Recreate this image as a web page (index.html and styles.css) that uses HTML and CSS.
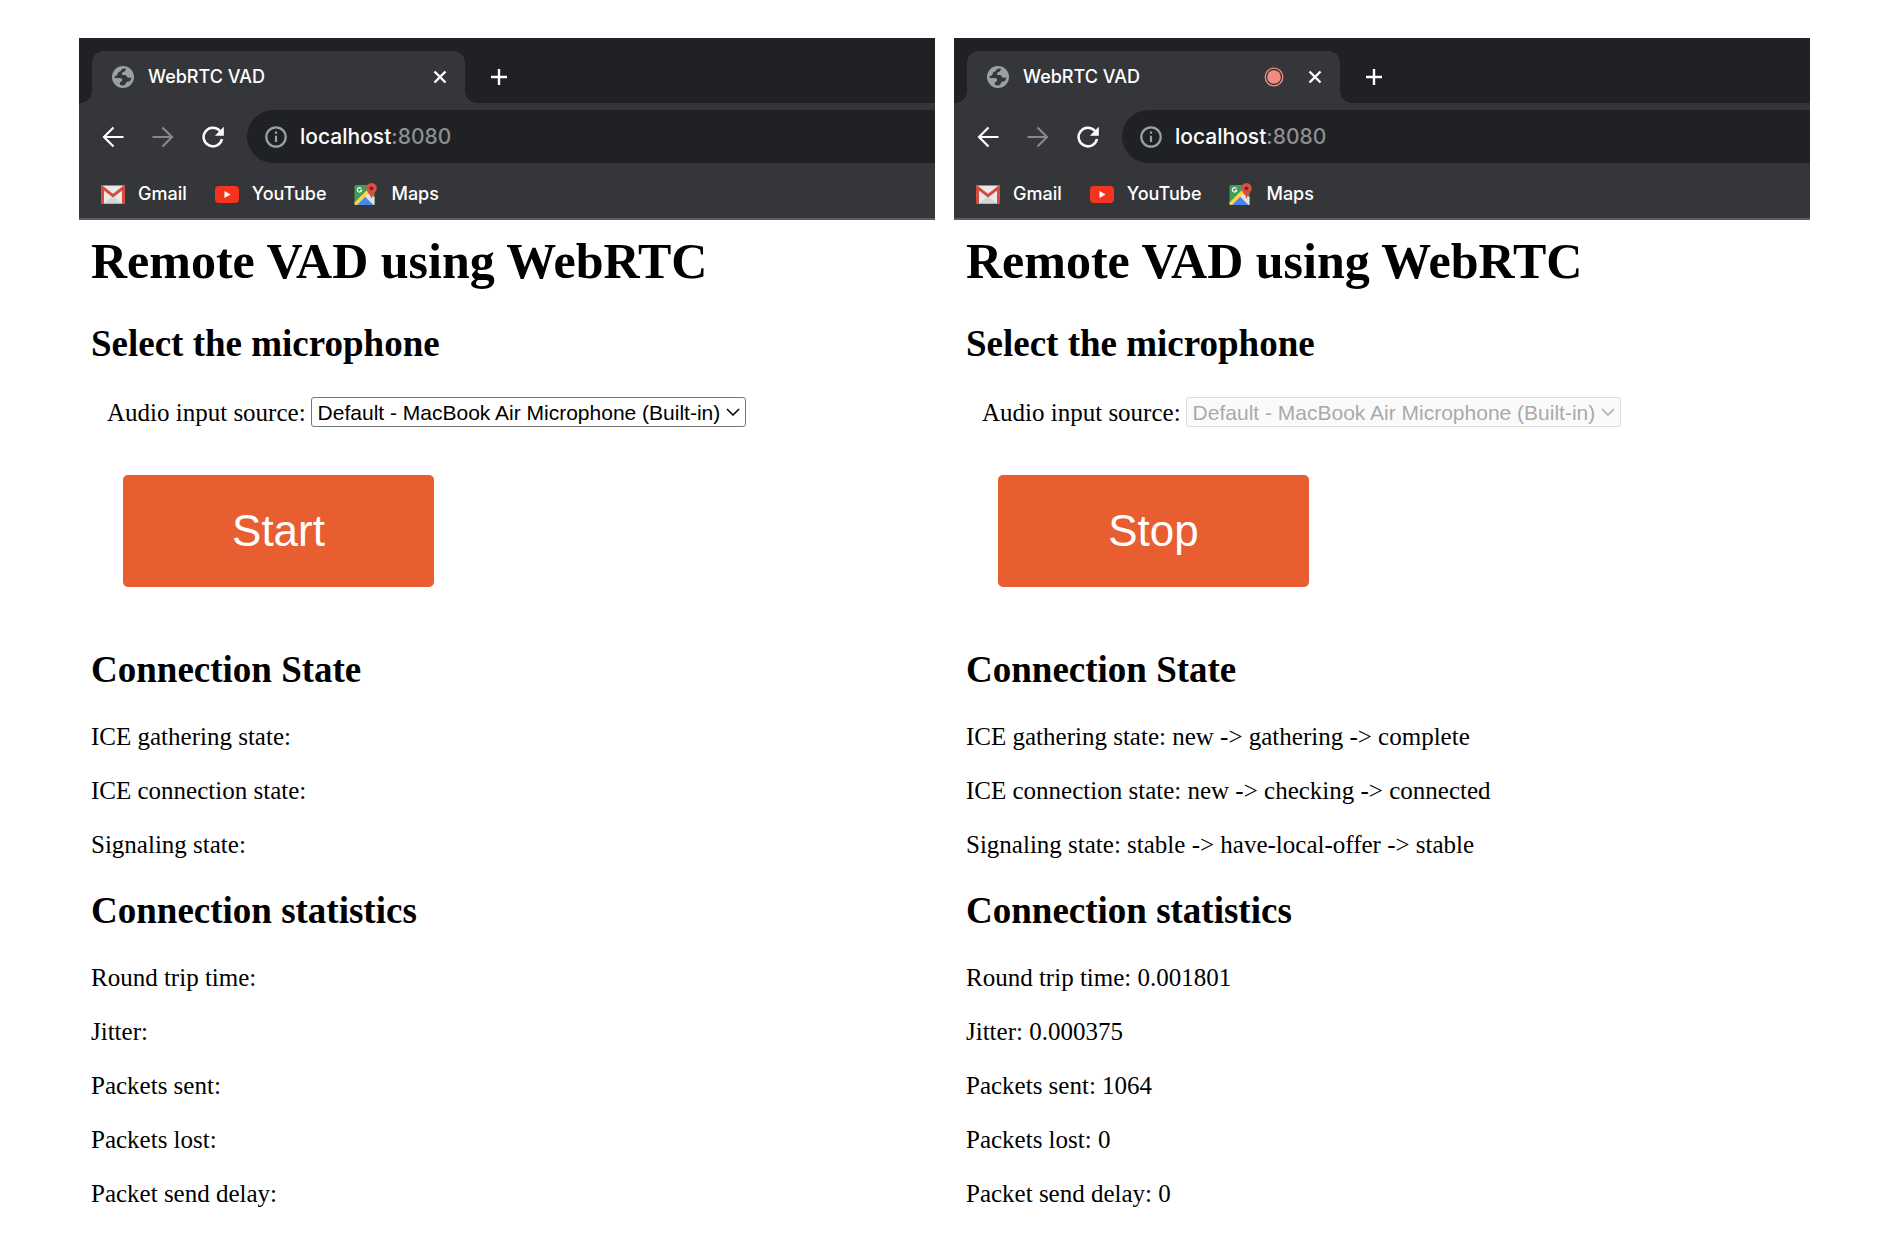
FILE: index.html
```html
<!DOCTYPE html>
<html lang="en">
<head>
<meta charset="utf-8">
<title>WebRTC VAD</title>
<link rel="stylesheet" href="styles.css">
</head>
<body>
<svg class="sprite" aria-hidden="true">
  <symbol id="globe" viewBox="0 0 22 22">
    <circle cx="11" cy="11" r="11" fill="#9aa0a6"/>
    <path d="M13.800 2.600C11.500 2.200 9.800 3 9.200 4.200 8.700 5.400 7.500 5.500 6.500 6.200 5.300 7.200 6 8.400 4.800 9.300 3.900 10 3 10 2.600 10.500V12h5.200c1.600 0 2.400.8 2.400 2 0 1.400-1.500 1.600-2.200 2.600-.5.800-.2 1.700.3 2.500 2 .8 3.700.5 4.700-.3.900-.8.600-2 1.600-2.700 1.100-.7 2.800-.3 3.700-1.600.7-1 1-2.100 1.100-3.300-1.300.8-2.600.9-3.700.2-1.300-.8-1.200-2.200-2.700-2.400-1.100-.1-2 .5-2.800-.3-.9-1 .1-2.200 1.300-2.600 1.500-.5 2.500-1.700 2.300-3.500z" fill="#35363a"/>
  </symbol>
  <symbol id="close" viewBox="0 0 14 14"><path d="M1.500 1.500l11 11M12.500 1.500l-11 11" stroke="#fff" stroke-width="2.400"/></symbol>
  <symbol id="plus" viewBox="0 0 16 16"><path d="M8 0v16M0 8h16" stroke="#fff" stroke-width="2.400"/></symbol>
  <symbol id="record" viewBox="0 0 20 20"><circle cx="10" cy="10" r="8.800" fill="none" stroke="#f28b82" stroke-width="1.300"/><circle cx="10" cy="10" r="6.800" fill="#f28b82"/></symbol>
  <symbol id="back" viewBox="0 0 22 22"><path d="M21.500 11H2M11.500 1.500L2 11l9.500 9.500" fill="none" stroke="currentColor" stroke-width="2.200"/></symbol>
  <symbol id="forward" viewBox="0 0 22 22"><path d="M.5 11H20M10.500 1.500L20 11l-9.500 9.500" fill="none" stroke="currentColor" stroke-width="2.200"/></symbol>
  <symbol id="reload" viewBox="0 0 22 22"><path d="M18 5A9.300 9.300 0 1 0 20 13" fill="none" stroke="#fff" stroke-width="2.500"/><path d="M21.800.8v9h-9z" fill="#fff"/></symbol>
  <symbol id="info" viewBox="0 0 22 22"><circle cx="11" cy="11" r="9.700" fill="none" stroke="#9aa0a6" stroke-width="2.200"/><path d="M11 9.700v6.300M11 5.500v2.300" stroke="#9aa0a6" stroke-width="2.200"/></symbol>
  <symbol id="gmail" viewBox="0 0 24 18">
    <rect width="24" height="18" rx="1.500" fill="#e9e9e9"/>
    <path d="M3 18l9-7.500 9 7.500z" fill="#d6d6d6"/>
    <path d="M1.500 18V2L12 10.200 22.500 2v16" fill="none" stroke="#d54b3d" stroke-width="3"/>
  </symbol>
  <symbol id="youtube" viewBox="0 0 24 17"><rect width="24" height="17" rx="4" fill="#f5341f"/><path d="M9.500 5v7l6-3.500z" fill="#fff"/></symbol>
  <symbol id="maps" viewBox="0 0 23 23">
    <rect y="2" width="20" height="20" rx="1.500" fill="#3f9d58"/>
    <path d="M1 21.500L12.500 10l7.500 4v8H1z" fill="#e4e4e4"/>
    <path d="M2 22l8.500-8.500 8.500 8.500z" fill="#4a86ee"/>
    <path d="M0 19.500L13 6.500l2 3L2.500 22H1.500A1.500 1.500 0 0 1 0 20.500z" fill="#fbd44b"/>
    <path d="M6.900 5.700A2.200 2.200 0 1 0 7.200 7.300H5.200" fill="none" stroke="#fff" stroke-width="1.100"/>
    <path d="M17 0a5.300 5.300 0 0 1 5.300 5.300c0 4-4 4.700-5.300 11-1.300-6.300-5.300-7-5.300-11A5.300 5.300 0 0 1 17 0z" fill="#d95040"/>
    <circle cx="17" cy="5.300" r="1.900" fill="#7d231a"/>
  </symbol>
</svg>

<main class="screens">
  <section class="window">
    <header class="chrome">
      <div class="tabstrip">
        <div class="tab">
          <svg class="favicon"><use href="#globe"/></svg>
          <span class="tab-title">WebRTC VAD</span>
          <button class="icon-button" aria-label="Close tab"><svg class="icon-close"><use href="#close"/></svg></button>
        </div>
        <button class="icon-button new-tab" aria-label="New tab"><svg class="icon-plus"><use href="#plus"/></svg></button>
      </div>
      <div class="toolbar">
        <button class="icon-button nav" aria-label="Back"><svg class="icon"><use href="#back"/></svg></button>
        <button class="icon-button nav dim" aria-label="Forward"><svg class="icon"><use href="#forward"/></svg></button>
        <button class="icon-button nav" aria-label="Reload"><svg class="icon"><use href="#reload"/></svg></button>
        <div class="omnibox"><svg class="icon"><use href="#info"/></svg><span class="url">localhost<span class="port">:8080</span></span></div>
      </div>
      <nav class="bookmarks">
        <a class="bookmark" href="#"><svg class="icon-mark"><use href="#gmail"/></svg>Gmail</a>
        <a class="bookmark" href="#"><svg class="icon-mark"><use href="#youtube"/></svg>YouTube</a>
        <a class="bookmark" href="#"><svg class="icon-mark"><use href="#maps"/></svg>Maps</a>
      </nav>
    </header>
    <div class="page">
      <h1>Remote VAD using WebRTC</h1>
      <h2>Select the microphone</h2>
      <div class="source">
        <label for="source-idle">Audio input source:</label>
        <select class="picker" id="source-idle"><option>Default - MacBook Air Microphone (Built-in)</option></select>
      </div>
      <button class="action">Start</button>
      <h2>Connection State</h2>
      <p>ICE gathering state:</p>
      <p>ICE connection state:</p>
      <p>Signaling state:</p>
      <h2>Connection statistics</h2>
      <p>Round trip time:</p>
      <p>Jitter:</p>
      <p>Packets sent:</p>
      <p>Packets lost:</p>
      <p>Packet send delay:</p>
    </div>
  </section>

  <section class="window">
    <header class="chrome">
      <div class="tabstrip">
        <div class="tab">
          <svg class="favicon"><use href="#globe"/></svg>
          <span class="tab-title">WebRTC VAD</span>
          <svg class="icon-record"><use href="#record"/></svg>
          <button class="icon-button" aria-label="Close tab"><svg class="icon-close"><use href="#close"/></svg></button>
        </div>
        <button class="icon-button new-tab" aria-label="New tab"><svg class="icon-plus"><use href="#plus"/></svg></button>
      </div>
      <div class="toolbar">
        <button class="icon-button nav" aria-label="Back"><svg class="icon"><use href="#back"/></svg></button>
        <button class="icon-button nav dim" aria-label="Forward"><svg class="icon"><use href="#forward"/></svg></button>
        <button class="icon-button nav" aria-label="Reload"><svg class="icon"><use href="#reload"/></svg></button>
        <div class="omnibox"><svg class="icon"><use href="#info"/></svg><span class="url">localhost<span class="port">:8080</span></span></div>
      </div>
      <nav class="bookmarks">
        <a class="bookmark" href="#"><svg class="icon-mark"><use href="#gmail"/></svg>Gmail</a>
        <a class="bookmark" href="#"><svg class="icon-mark"><use href="#youtube"/></svg>YouTube</a>
        <a class="bookmark" href="#"><svg class="icon-mark"><use href="#maps"/></svg>Maps</a>
      </nav>
    </header>
    <div class="page">
      <h1>Remote VAD using WebRTC</h1>
      <h2>Select the microphone</h2>
      <div class="source">
        <label for="source-live">Audio input source:</label>
        <select class="picker" id="source-live" disabled><option>Default - MacBook Air Microphone (Built-in)</option></select>
      </div>
      <button class="action">Stop</button>
      <h2>Connection State</h2>
      <p>ICE gathering state: new -&gt; gathering -&gt; complete</p>
      <p>ICE connection state: new -&gt; checking -&gt; connected</p>
      <p>Signaling state: stable -&gt; have-local-offer -&gt; stable</p>
      <h2>Connection statistics</h2>
      <p>Round trip time: 0.001801</p>
      <p>Jitter: 0.000375</p>
      <p>Packets sent: 1064</p>
      <p>Packets lost: 0</p>
      <p>Packet send delay: 0</p>
    </div>
  </section>
</main>
</body>
</html>
```
FILE: styles.css
```css
* { box-sizing: border-box; }

body {
  margin: 0;
  background: #fff;
  color: #000;
  font-family: "Liberation Serif", "Times New Roman", serif;
  font-size: 25px;
  line-height: 29px;
}

.sprite { display: none; }

.screens {
  display: flex;
  gap: 19px;
  padding: 38px 68px 24px 79px;
}

.window { flex: 1; min-width: 0; }

/* Browser frame */
.chrome {
  background: #35363a;
  border-bottom: 2px solid #5c5d60;
  color: #fff;
  font-family: Inter, "Liberation Sans", sans-serif;
  font-size: 18px;
  font-weight: 500;
  line-height: 24px;
}

.tabstrip {
  display: flex;
  align-items: flex-end;
  padding: 13px 13px 0;
  background: #202124;
}

.tab {
  position: relative;
  display: flex;
  align-items: center;
  width: 373px;
  height: 52px;
  padding: 0 18px 0 20px;
  border-radius: 12px 12px 0 0;
  background: #35363a;
}

.tab::before,
.tab::after {
  content: "";
  position: absolute;
  bottom: 0;
  width: 12px;
  height: 12px;
}
.tab::before { right: 100%; background: radial-gradient(circle at 0 0, transparent 12px, #35363a 12px); }
.tab::after { left: 100%; background: radial-gradient(circle at 100% 0, transparent 12px, #35363a 12px); }

.favicon { width: 22px; height: 22px; margin-right: 14px; }
.tab-title { flex: 1; }

.icon-button {
  display: flex;
  align-items: center;
  justify-content: center;
  padding: 0;
  border: 0;
  background: none;
  color: #fff;
}

.icon-close { width: 14px; height: 14px; }
.icon-plus { width: 16px; height: 16px; }
.icon-record { width: 20px; height: 20px; margin-right: 24px; }
.new-tab { height: 52px; margin-left: 26px; }
.icon { width: 22px; height: 22px; }

.toolbar {
  display: flex;
  align-items: center;
  gap: 28px;
  padding: 7px 0 0 23px;
}
.dim { color: #87888b; }

.omnibox {
  flex: 1;
  display: flex;
  align-items: center;
  gap: 13px;
  height: 53px;
  margin-left: -5px;
  padding-left: 18px;
  border-radius: 27px 0 0 27px;
  background: #202124;
  font-size: 21px;
}
.port { color: #8d8e91; }

.bookmarks {
  display: flex;
  align-items: center;
  gap: 28px;
  height: 55px;
  padding: 7px 22px 0;
}
.bookmark {
  display: flex;
  align-items: center;
  gap: 13px;
  color: #fff;
  text-decoration: none;
}
.icon-mark { width: 24px; height: 23px; }

/* Page content */
.page { padding: 12px 12px 0; }

h1 {
  margin: 0 0 32px;
  font-size: 50px;
  line-height: 58px;
}
h2 {
  margin: 30px 0;
  font-size: 37px;
  line-height: 44px;
}
p { margin: 25px 0; }

.source {
  display: flex;
  align-items: center;
  gap: 5px;
  padding: 1px 0 0 16px;
}

.picker {
  appearance: none;
  height: 30px;
  padding: 0 23px 0 6px;
  border: 1px solid #767676;
  border-radius: 3px;
  background: #fff url("data:image/svg+xml,%3Csvg xmlns='http://www.w3.org/2000/svg' width='14' height='8'%3E%3Cpath d='M1 1l6 6 6-6' fill='none' stroke='%23000' stroke-width='1.5'/%3E%3C/svg%3E") no-repeat right 5px center;
  color: #000;
  font-family: "Liberation Sans", Arial, sans-serif;
  font-size: 21px;
}
.picker:disabled {
  opacity: 1;
  border-color: #dcdcdc;
  background-color: #fafafa;
  background-image: url("data:image/svg+xml,%3Csvg xmlns='http://www.w3.org/2000/svg' width='14' height='8'%3E%3Cpath d='M1 1l6 6 6-6' fill='none' stroke='%23aaa' stroke-width='1.5'/%3E%3C/svg%3E");
  color: #aaa;
}

.action {
  display: block;
  width: 311px;
  height: 112px;
  margin: 48px 32px 61px;
  border: 0;
  border-radius: 5px;
  background: #e85e30;
  color: #fff;
  font-family: "Liberation Sans", Arial, sans-serif;
  font-size: 44px;
}
```
